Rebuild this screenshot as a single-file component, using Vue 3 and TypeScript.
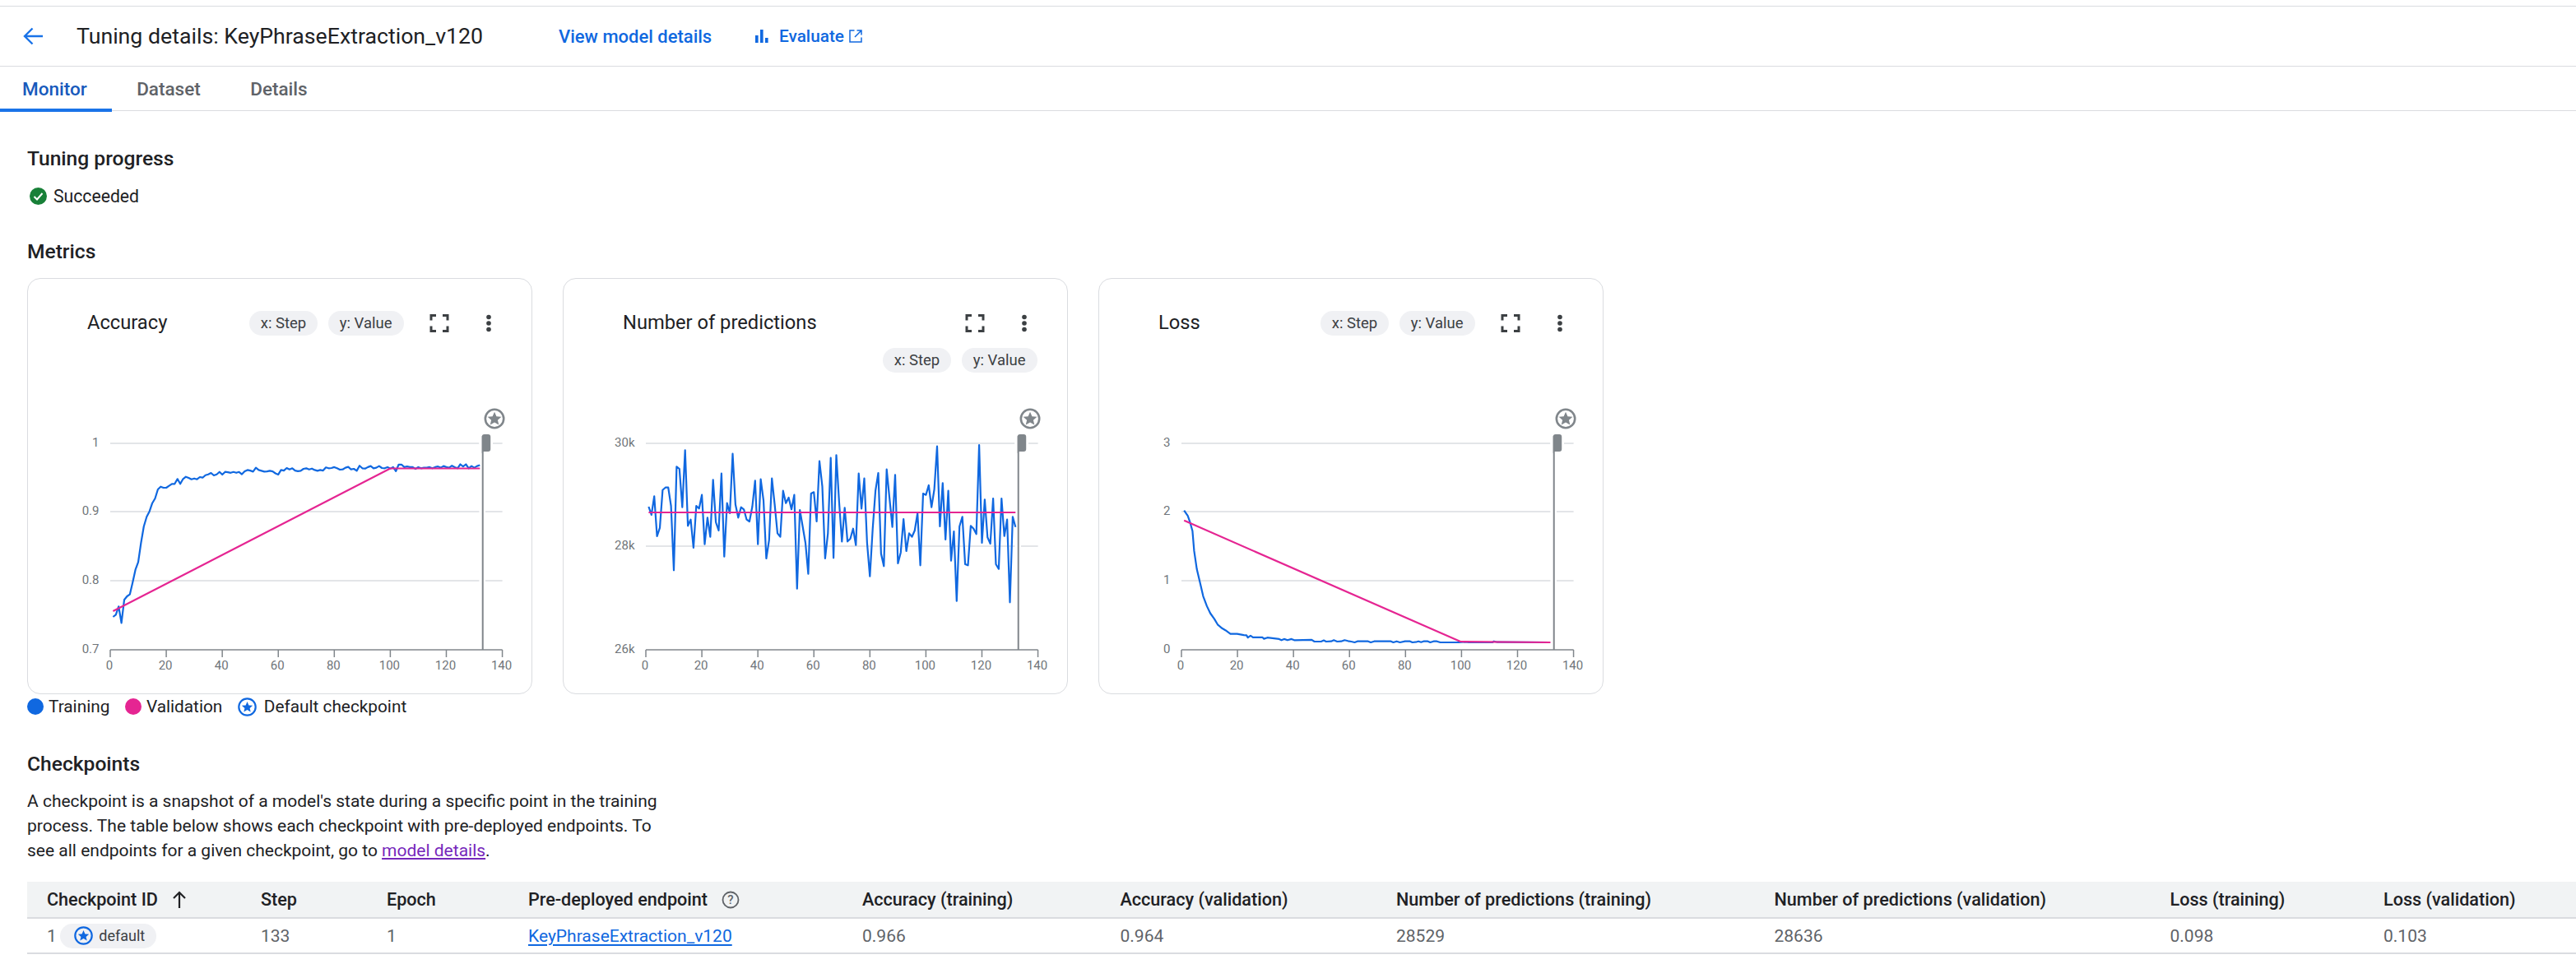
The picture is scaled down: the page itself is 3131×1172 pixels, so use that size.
<script setup lang="ts">
interface Tick {
  label: string;
  y: number;
}

interface Chart {
  title: string;
  wrapChips: boolean;
  ticks: Tick[];
  training: string;
  validation: string;
}

const stepX = (s: number) => 100 + 3.404 * s;
const toPoints = (pts: number[][]) => pts.map(([x, y]) => `${x.toFixed(1)},${y.toFixed(1)}`).join(' ');

// first part read off at 3x from y=570, the rest at 2.9x from y=330
const accEarly = [
  540, 532, 502, 562, 478, 465, 458, 415, 368, 340, 270, 210, 175, 155, 125, 108, 75, 65, 69, 69, 62, 55, 55, 37, 55,
  37, 29, 33, 38, 35, 38, 30, 32, 23, 20, 15, 24, 20, 11, 21, 11,
];
const accLate = [
  708, 710, 707, 710, 707, 715, 705, 700, 702, 706, 692, 700, 703, 706, 705, 703, 705, 712, 716, 700, 702, 693, 698,
  694, 702, 704, 703, 696, 694, 698, 695, 700, 703, 700, 702, 691, 694, 693, 690, 694, 699, 698, 692, 689, 698, 696,
  703, 685, 694, 695, 690, 686, 694, 692, 686, 693, 694, 690, 695, 690, 704, 681, 681, 690, 688, 690, 690, 696, 690,
  694, 692, 692, 690, 694, 690, 688, 692, 686, 690, 692, 685, 690, 694, 680, 688, 680, 694, 686, 692, 686, 683,
];
const accuracy = [...accEarly.map((v) => 70 + v / 3), ...accLate.map((v) => v / 2.9 - 170)];

const predictions = [
  258, 288, 220, 366, 335, 197, 188, 188, 255, 490, 112, 120, 260, 52, 328, 305, 408, 255, 265, 215, 395, 298, 368, 160,
  315, 345, 137, 440, 245, 282, 65, 250, 298, 260, 268, 305, 312, 258, 163, 395, 158, 235, 447, 380, 155, 250, 355, 368,
  200, 245, 225, 268, 215, 557, 270, 330, 390, 503, 210, 205, 312, 92, 185, 447, 355, 80, 445, 70, 240, 385, 262, 385,
  375, 338, 398, 137, 265, 155, 390, 512, 340, 200, 135, 430, 475, 122, 225, 332, 142, 465, 425, 303, 420, 355, 368,
  345, 282, 472, 210, 215, 180, 260, 195, 38, 330, 172, 378, 200, 455, 348, 602, 330, 295, 468, 472, 328, 338, 358, 33,
  390, 232, 370, 393, 228, 468, 485, 228, 365, 305, 607, 295, 332,
];

const lossRaw = [
  [292, 843], [303, 862], [310, 885], [317, 915], [322, 985], [330, 1050], [340, 1100], [349, 1145], [360, 1180],
  [370, 1205], [382, 1225], [392, 1245], [405, 1258], [415, 1265], [430, 1278], [450, 1278], [470, 1282], [478, 1283],
  [482, 1291], [490, 1284], [497, 1290], [525, 1290], [530, 1295], [540, 1291], [575, 1296], [582, 1300], [590, 1296],
  [600, 1300], [612, 1296], [620, 1300], [672, 1299], [680, 1305], [700, 1305], [708, 1301], [715, 1305], [730, 1304],
  [738, 1300], [748, 1305], [760, 1304], [770, 1300], [780, 1303], [790, 1305], [800, 1308], [808, 1304], [840, 1304],
  [848, 1308], [858, 1304], [908, 1304], [915, 1308], [925, 1304], [935, 1308], [950, 1304], [965, 1304], [972, 1308],
  [985, 1306], [990, 1304], [998, 1307], [1005, 1304], [1018, 1304], [1025, 1308], [1035, 1304], [1045, 1304],
  [1055, 1308], [1110, 1308], [1130, 1306], [1140, 1308], [1210, 1308], [1215, 1304], [1225, 1307], [1380, 1308],
];
const lossPoint = ([x, y]: number[]) => [x / 2.45 - 16, y / 2.9 - 170];

const charts: Chart[] = [
  {
    title: 'Accuracy',
    wrapChips: false,
    ticks: [
      { label: '1', y: 39 },
      { label: '0.9', y: 122 },
      { label: '0.8', y: 206 },
      { label: '0.7', y: 290 },
    ],
    training: toPoints(accuracy.map((y, i) => [stepX(i + 1), y])),
    validation: toPoints([
      [stepX(1), 243],
      [stepX(100), 69.5],
      [stepX(132), 69.5],
    ]),
  },
  {
    title: 'Number of predictions',
    wrapChips: true,
    ticks: [
      { label: '30k', y: 39 },
      { label: '28k', y: 164 },
      { label: '26k', y: 290 },
    ],
    training: toPoints(predictions.map((v, i) => [stepX(i + 1), 30 + v / 3])),
    validation: toPoints([
      [stepX(1), 123],
      [stepX(132), 123],
    ]),
  },
  {
    title: 'Loss',
    wrapChips: false,
    ticks: [
      { label: '3', y: 39 },
      { label: '2', y: 122 },
      { label: '1', y: 206 },
      { label: '0', y: 290 },
    ],
    training: toPoints(lossRaw.map(lossPoint)),
    validation: toPoints(
      [
        [292, 878],
        [1115, 1305],
        [1383, 1308],
      ].map(lossPoint),
    ),
  },
];

const xTicks = [0, 20, 40, 60, 80, 100, 120, 140];
const markerX = stepX(133);

const colWidths = [260, 153, 172, 406, 313.5, 335.5, 459.5, 481, 259.5, 258];
const headers = [
  'Accuracy (training)',
  'Accuracy (validation)',
  'Number of predictions (training)',
  'Number of predictions (validation)',
  'Loss (training)',
  'Loss (validation)',
];
const values = ['0.966', '0.964', '28529', '28636', '0.098', '0.103'];
</script>

<template>
  <div class="page">
    <header class="topbar">
      <svg class="back" width="26" height="24" viewBox="0 0 26 24">
        <path d="M25 12H3M12.5 2.5 3 12l9.5 9.5" fill="none" stroke="#1a73e8" stroke-width="2.4" />
      </svg>
      <h1 class="page-title">Tuning details: KeyPhraseExtraction_v120</h1>
      <a class="action view-details">View model details</a>
      <a class="action evaluate">
        <svg width="16" height="16" viewBox="0 0 16 16">
          <path d="M0 7h3.6v9H0zM6 0h3.6v16H6zM12 10h3.6v6H12z" fill="#1068e0" />
        </svg>
        <span>Evaluate</span>
        <svg width="16" height="16" viewBox="0 0 16 16">
          <path
            d="M6.5 1H1v14h14V9.500M9.500 1H15v5.500M15 1 7 9"
            fill="none"
            stroke="#1068e0"
            stroke-width="1.5"
          />
        </svg>
      </a>
    </header>

    <nav class="tabs">
      <a class="tab active">Monitor</a>
      <a class="tab">Dataset</a>
      <a class="tab">Details</a>
    </nav>

    <main class="content">
      <h2 class="section-title progress-title">Tuning progress</h2>
      <div class="status">
        <svg width="21" height="21" viewBox="0 0 21 21">
          <circle cx="10.500" cy="10.500" r="10.500" fill="#188038" />
          <path d="M5.500 11 9 14.500l6.500-7.500" fill="none" stroke="#fff" stroke-width="2" />
        </svg>
        <span>Succeeded</span>
      </div>

      <h2 class="section-title metrics-title">Metrics</h2>
      <div class="cards">
        <section v-for="chart in charts" :key="chart.title" class="card">
          <div class="card-head" :class="{ wrap: chart.wrapChips }">
            <span class="card-title">{{ chart.title }}</span>
            <div class="chips">
              <span class="chip">x: Step</span>
              <span class="chip">y: Value</span>
            </div>
            <div class="card-actions">
              <svg width="60" height="22" viewBox="0 0 60 22">
                <path
                  d="M20 7.500V1.500h6M34 1.500h6v6M40 14.500v6h-6M26 20.500h-6v-6"
                  fill="none"
                  stroke="#3c4043"
                  stroke-width="3"
                />
              </svg>
              <svg width="60" height="22" viewBox="0 0 60 22">
                <circle cx="30" cy="3.500" r="2.800" fill="#3c4043" />
                <circle cx="30" cy="11" r="2.800" fill="#3c4043" />
                <circle cx="30" cy="18.500" r="2.800" fill="#3c4043" />
              </svg>
            </div>
          </div>

          <svg class="plot" width="611" height="340">
            <line v-for="t in chart.ticks.slice(0, -1)" :key="t.y" x1="100" x2="576.6" :y1="t.y" :y2="t.y" class="grid" />
            <rect :x="markerX - 4.300" y="28" width="7.600" height="262" fill="#fff" />
            <rect :x="markerX - 4.300" y="28" width="16.600" height="21" fill="#fff" />

            <text v-for="t in chart.ticks" :key="t.label" x="86.500" :y="t.y + 4" text-anchor="end" class="tick-label">
              {{ t.label }}
            </text>

            <line x1="100" x2="576.6" y1="290" y2="290" class="axis" />
            <g v-for="(x, i) in xTicks" :key="x">
              <line :x1="100 + 68.08 * i" :x2="100 + 68.08 * i" y1="290" y2="299" class="axis" />
              <text :x="99 + 68.08 * i" y="314" text-anchor="middle" class="tick-label">{{ x }}</text>
            </g>

            <polyline :points="chart.training" class="series training" />
            <polyline :points="chart.validation" class="series validation" />

            <line :x1="markerX" :x2="markerX" y1="30" y2="290" class="marker" />
            <path
              :d="`M${markerX - 1} 31a3 3 0 0 1 3-3h4.500a3 3 0 0 1 3 3v15a3 3 0 0 1-3 3h-6l-1.500 2z`"
              fill="#80868b"
            />
            <g :transform="`translate(${markerX + 14.300} 9)`">
              <circle r="11.200" fill="#fff" stroke="#80868b" stroke-width="2.600" />
              <path
                transform="scale(1.150)"
                d="M0-7.200 2.100-2.300 7.300-1.900 3.400 1.500 4.600 6.600 0 3.900-4.600 6.600-3.400 1.500-7.300-1.900-2.100-2.300z"
                fill="#80868b"
              />
            </g>
          </svg>
        </section>
      </div>

      <div class="legend">
        <span class="legend-item"><i class="dot dot-blue" />Training</span>
        <span class="legend-item"><i class="dot dot-pink" />Validation</span>
        <span class="legend-item">
          <svg width="23" height="23" viewBox="-11.500 -11.500 23 23">
            <circle r="10.200" fill="none" stroke="#1068e0" stroke-width="2.200" />
            <path
              d="M0-6.600 1.900-2.100 6.700-1.700 3.100 1.400 4.200 6 0 3.600-4.200 6-3.100 1.400-6.700-1.700-1.900-2.100z"
              fill="#1068e0"
            />
          </svg>
          Default checkpoint
        </span>
      </div>

      <h2 class="section-title checkpoints-title">Checkpoints</h2>
      <p class="intro">
        A checkpoint is a snapshot of a model's state during a specific point in the training process. The table below
        shows each checkpoint with pre-deployed endpoints. To see all endpoints for a given checkpoint, go to
        <a class="visited">model details</a>.
      </p>

      <table class="table">
        <colgroup>
          <col v-for="(w, i) in colWidths" :key="i" :style="{ width: w + 'px' }" />
        </colgroup>
        <thead>
          <tr>
            <th>
              <span class="th-inner">
                Checkpoint ID
                <svg width="18" height="22" viewBox="0 0 18 22">
                  <path d="M9 21V2M2 9l7-7 7 7" fill="none" stroke="#202124" stroke-width="2.200" />
                </svg>
              </span>
            </th>
            <th>Step</th>
            <th>Epoch</th>
            <th>
              <span class="th-inner">
                Pre-deployed endpoint
                <svg width="22" height="22" viewBox="0 0 22 22">
                  <circle cx="11" cy="11" r="9.500" fill="none" stroke="#5f6368" stroke-width="1.800" />
                  <text x="11" y="16" text-anchor="middle" class="help-mark">?</text>
                </svg>
              </span>
            </th>
            <th v-for="h in headers" :key="h">{{ h }}</th>
          </tr>
        </thead>
        <tbody>
          <tr>
            <td>
              <span class="id-cell">
                1
                <span class="default-chip">
                  <svg width="23" height="23" viewBox="-11.500 -11.500 23 23">
                    <circle r="10.200" fill="none" stroke="#1068e0" stroke-width="2.200" />
                    <path
                      d="M0-6.600 1.900-2.100 6.700-1.700 3.100 1.400 4.200 6 0 3.600-4.200 6-3.100 1.400-6.700-1.700-1.900-2.100z"
                      fill="#1068e0"
                    />
                  </svg>
                  default
                </span>
              </span>
            </td>
            <td>133</td>
            <td>1</td>
            <td><a class="endpoint">KeyPhraseExtraction_v120</a></td>
            <td v-for="v in values" :key="v">{{ v }}</td>
          </tr>
        </tbody>
      </table>
    </main>
  </div>
</template>

<style>
  html,
  body {
    background: #fff;
    overflow: hidden;
  }
</style>

<style scoped>
  .page {
    width: 3131px;
    height: 1172px;
    overflow: hidden;
    font-family: Roboto, 'Noto Sans', sans-serif;
    color: #202124;
    padding-top: 7px;
    box-sizing: border-box;
  }
  .topbar {
    display: flex;
    align-items: center;
    height: 74px;
    box-sizing: border-box;
    border-top: 1.5px solid #dadce0;
    border-bottom: 1.5px solid #dadce0;
    padding-left: 27px;
  }
  .back {
    flex-shrink: 0;
  }
  .page-title {
    margin: 0 0 0 40px;
    width: 586px;
    font-size: 26.700px;
    font-weight: 400;
    white-space: nowrap;
  }
  .action {
    color: #1068e0;
    font-size: 22px;
    font-weight: 500;
  }
  .view-details {
    width: 239px;
  }
  .evaluate {
    display: flex;
    align-items: center;
    gap: 13px;
    font-size: 20.800px;
  }
  .evaluate span {
    margin-right: -7px;
  }
  .tabs {
    display: flex;
    height: 54px;
    box-sizing: border-box;
    border-bottom: 1.5px solid #dadce0;
  }
  .tab {
    display: flex;
    align-items: center;
    padding: 0 30px 0 30.500px;
    font-size: 22.500px;
    font-weight: 500;
    color: #5f6368;
    box-sizing: border-box;
    margin-bottom: -1.5px;
  }
  .tab.active {
    color: #185abc;
    padding: 4px 30px 0 27px;
    border-bottom: 4px solid #1a73e8;
  }
  .content {
    padding-left: 33px;
  }
  .section-title {
    margin: 0;
    font-size: 24.600px;
    font-weight: 500;
    line-height: 30px;
  }
  .progress-title {
    margin-top: 43px;
  }
  .status {
    display: flex;
    align-items: center;
    gap: 8px;
    height: 30px;
    margin: 15px 0 0 3px;
    font-size: 21.200px;
  }
  .metrics-title {
    margin-top: 38px;
  }
  .cards {
    display: flex;
    gap: 37.5px;
    margin-top: 17px;
  }
  .card {
    width: 613.5px;
    height: 506px;
    box-sizing: border-box;
    border: 1px solid #dadce0;
    border-radius: 16px;
  }
  .card-head {
    display: flex;
    flex-wrap: wrap;
    align-items: center;
    height: 161px;
    align-content: flex-start;
    box-sizing: border-box;
    padding: 39px 22px 0 72px;
  }
  .card-title {
    margin-right: auto;
    margin-bottom: 2px;
    font-size: 23.700px;
    line-height: 28px;
  }
  .chips {
    display: flex;
    gap: 12.500px;
    margin-right: 13px;
  }
  .chip {
    height: 30px;
    line-height: 30px;
    padding: 0 14px;
    border-radius: 15px;
    background: #f0f1f4;
    font-size: 18.500px;
    color: #3c4043;
  }
  .card-actions {
    display: flex;
    height: 30px;
    align-items: center;
  }
  .wrap .chips {
    order: 3;
    width: 100%;
    margin: 15px 14px 0 0;
    justify-content: flex-end;
  }
  .plot {
    display: block;
    overflow: visible;
  }
  .grid {
    stroke: #dadce0;
    stroke-width: 1.500;
  }
  .axis {
    stroke: #80868b;
    stroke-width: 1.500;
  }
  .tick-label {
    font-size: 15px;
    fill: #70757a;
  }
  .series {
    fill: none;
    stroke-width: 2.200;
    stroke-linejoin: round;
  }
  .training {
    stroke: #1068e0;
  }
  .validation {
    stroke: #e52592;
  }
  .marker {
    stroke: #80868b;
    stroke-width: 2;
  }
  .legend {
    display: flex;
    align-items: center;
    gap: 18.500px;
    height: 24px;
    margin-top: 3px;
    font-size: 20.800px;
  }
  .legend-item {
    display: flex;
    align-items: center;
    gap: 6px;
  }
  .legend-item svg {
    margin-right: 3px;
  }
  .dot {
    width: 20px;
    height: 20px;
    border-radius: 50%;
  }
  .dot-blue {
    background: #1068e0;
  }
  .dot-pink {
    background: #e52592;
  }
  .checkpoints-title {
    margin-top: 43px;
  }
  .intro {
    width: 790px;
    margin: 15px 0 23px;
    font-size: 21px;
    line-height: 30px;
  }
  .visited {
    color: #7627bb;
    text-decoration: underline;
  }
  .table {
    width: 3098px;
    table-layout: fixed;
    border-collapse: collapse;
    font-size: 21px;
  }
  th {
    height: 44px;
    padding: 0 0 0 24px;
    box-sizing: border-box;
    text-align: left;
    font-size: 21.600px;
    font-weight: 500;
    background: #f1f3f4;
    border-bottom: 2px solid #dadce0;
    white-space: nowrap;
  }
  .th-inner {
    display: inline-flex;
    align-items: center;
    gap: 17px;
  }
  .help-mark {
    font-size: 15px;
    fill: #5f6368;
  }
  td {
    height: 43px;
    padding: 0 0 0 24px;
    box-sizing: border-box;
    color: #5f6368;
    border-bottom: 2px solid #dadce0;
    white-space: nowrap;
  }
  .id-cell {
    display: inline-flex;
    align-items: center;
    gap: 4.500px;
  }
  .default-chip {
    display: inline-flex;
    align-items: center;
    gap: 7px;
    height: 30px;
    padding: 0 14px 0 17px;
    border-radius: 15px;
    background: #f0f1f4;
    color: #3c4043;
    font-size: 18px;
  }
  .endpoint {
    color: #1068e0;
    text-decoration: underline;
    text-decoration-thickness: 2px;
    text-underline-offset: 3px;
  }
</style>
